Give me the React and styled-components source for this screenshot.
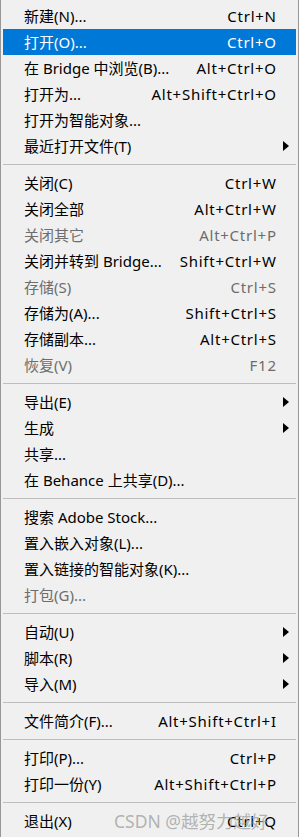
import React from "react";
import styled, { createGlobalStyle } from "styled-components";

const Global = createGlobalStyle`
  html, body { margin: 0; padding: 0; background: #f0f0f0; }
  body { font-family: "Noto Sans", "Noto Sans CJK SC", sans-serif; }
`;

const Menu = styled.div`
  position: relative;
  width: 299px;
  height: 837px;
  box-sizing: border-box;
  background: #f0f0f0;
  border-left: 1px solid #979797;
  border-right: 1px solid #979797;
  padding: 3px 2px;
  font-family: "Noto Sans", "Noto Sans CJK SC", sans-serif;
  font-size: 15px;
  overflow: hidden;
`;

const Row = styled.div`
  display: grid;
  grid-template-columns: 1fr auto 20px;
  align-items: center;
  height: 26px;
  padding-left: 21px;
  color: ${(p) => (p.$active ? "#ffffff" : p.$disabled ? "#6d6d6d" : "#000000")};
  background: ${(p) => (p.$active ? "#0078d7" : "transparent")};
  white-space: nowrap;
  line-height: 26px;
`;

const Label = styled.span`
  overflow: hidden;
`;

const Shortcut = styled.span`
  text-align: right;
  letter-spacing: 0.75px;
  margin-right: -0.75px;
`;

const Arrow = styled.span`
  display: block;
  width: 0;
  height: 0;
  margin-left: 7px;
  border-top: 5px solid transparent;
  border-bottom: 5px solid transparent;
  border-left: 6px solid #000;
`;

const Separator = styled.div`
  height: 1px;
  margin: 5px 0;
  background: #bdbdbd;
`;

const Watermark = styled.div`
  position: absolute;
  left: 113px;
  top: 808px;
  height: 26px;
  line-height: 26px;
  font-family: "Noto Sans", "Noto Sans CJK SC", sans-serif;
  font-size: 17.5px;
  color: rgba(150, 150, 150, 0.7);
  white-space: nowrap;
  pointer-events: none;
`;

const groups = [
  [
    { l: "新建(N)...", s: "Ctrl+N" },
    { l: "打开(O)...", s: "Ctrl+O", active: true },
    { l: "在 Bridge 中浏览(B)...", s: "Alt+Ctrl+O" },
    { l: "打开为...", s: "Alt+Shift+Ctrl+O" },
    { l: "打开为智能对象..." },
    { l: "最近打开文件(T)", sub: true },
  ],
  [
    { l: "关闭(C)", s: "Ctrl+W" },
    { l: "关闭全部", s: "Alt+Ctrl+W" },
    { l: "关闭其它", s: "Alt+Ctrl+P", dis: true },
    { l: "关闭并转到 Bridge...", s: "Shift+Ctrl+W" },
    { l: "存储(S)", s: "Ctrl+S", dis: true },
    { l: "存储为(A)...", s: "Shift+Ctrl+S" },
    { l: "存储副本...", s: "Alt+Ctrl+S" },
    { l: "恢复(V)", s: "F12", dis: true },
  ],
  [
    { l: "导出(E)", sub: true },
    { l: "生成", sub: true },
    { l: "共享..." },
    { l: "在 Behance 上共享(D)..." },
  ],
  [
    { l: "搜索 Adobe Stock..." },
    { l: "置入嵌入对象(L)..." },
    { l: "置入链接的智能对象(K)..." },
    { l: "打包(G)...", dis: true },
  ],
  [
    { l: "自动(U)", sub: true },
    { l: "脚本(R)", sub: true },
    { l: "导入(M)", sub: true },
  ],
  [{ l: "文件简介(F)...", s: "Alt+Shift+Ctrl+I" }],
  [
    { l: "打印(P)...", s: "Ctrl+P" },
    { l: "打印一份(Y)", s: "Alt+Shift+Ctrl+P" },
  ],
  [{ l: "退出(X)", s: "Ctrl+Q" }],
];

export default function App() {
  return (
    <>
      <Global />
      <Menu>
        {groups.map((g, gi) => (
          <React.Fragment key={gi}>
            {gi > 0 && <Separator />}
            {g.map((it, i) => (
              <Row key={i} $active={it.active} $disabled={it.dis}>
                <Label>{it.l}</Label>
                <Shortcut>{it.s || ""}</Shortcut>
                <span>{it.sub && <Arrow />}</span>
              </Row>
            ))}
          </React.Fragment>
        ))}
        <Watermark>CSDN @越努力越好</Watermark>
      </Menu>
    </>
  );
}
